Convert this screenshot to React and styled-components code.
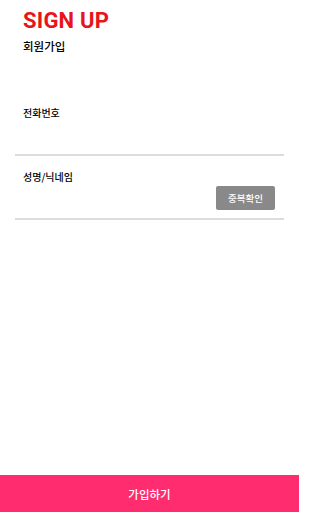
import React from 'react';
import styled, { createGlobalStyle } from 'styled-components';

const GlobalStyle = createGlobalStyle`
  html, body {
    margin: 0;
    padding: 0;
    background: #fff;
  }
  body {
    font-family: "Noto Sans CJK KR", "Noto Sans", sans-serif;
    color: #000;
  }
`;

const Page = styled.div`
  width: 299px;
  min-height: 100vh;
  display: flex;
  flex-direction: column;
`;

const Header = styled.header`
  padding: 8px 23px 0;
`;

const Title = styled.h1`
  margin: 0;
  font-family: Roboto, "Liberation Sans", sans-serif;
  font-weight: 700;
  font-size: 22px;
  line-height: 26px;
  color: #e8141b;
  letter-spacing: 0.2px;
`;

const Subtitle = styled.div`
  margin-top: 4px;
  font-size: 11.5px;
  font-weight: 500;
  line-height: 16px;
`;

const Form = styled.form`
  margin: 52px 15px 0;
  display: flex;
  flex-direction: column;
`;

const Field = styled.div`
  padding: ${({ $top }) => $top}px 8px 0 8px;
  height: ${({ $height }) => $height}px;
  box-sizing: border-box;
  border-bottom: 2px solid #dcdcdc;
  display: flex;
  flex-direction: column;
`;

const Label = styled.label`
  font-size: 10px;
  font-weight: 500;
  line-height: 14px;
  color: #000;
`;

const ActionRow = styled.div`
  display: flex;
  justify-content: flex-end;
  margin-top: 2px;
  padding-right: 1px;
`;

const CheckButton = styled.button`
  width: 59px;
  height: 24px;
  border: none;
  border-radius: 2px;
  background: #898989;
  color: #fff;
  font-family: inherit;
  font-size: 9.5px;
  font-weight: 500;
  padding: 0;
  cursor: pointer;
`;

const SubmitBar = styled.button`
  margin-top: auto;
  height: 37px;
  width: 100%;
  border: none;
  background: #ff2d6f;
  color: #fff;
  font-family: inherit;
  font-size: 11.5px;
  font-weight: 500;
  cursor: pointer;
`;

const App = () => (
  <>
    <GlobalStyle />
    <Page>
      <Header>
        <Title>SIGN UP</Title>
        <Subtitle>회원가입</Subtitle>
      </Header>
      <Form>
        <Field $top={0} $height={50}>
          <Label>전화번호</Label>
        </Field>
        <Field $top={14} $height={64}>
          <Label>성명/닉네임</Label>
          <ActionRow>
            <CheckButton type="button">중복확인</CheckButton>
          </ActionRow>
        </Field>
      </Form>
      <SubmitBar type="button">가입하기</SubmitBar>
    </Page>
  </>
);

export default App;
